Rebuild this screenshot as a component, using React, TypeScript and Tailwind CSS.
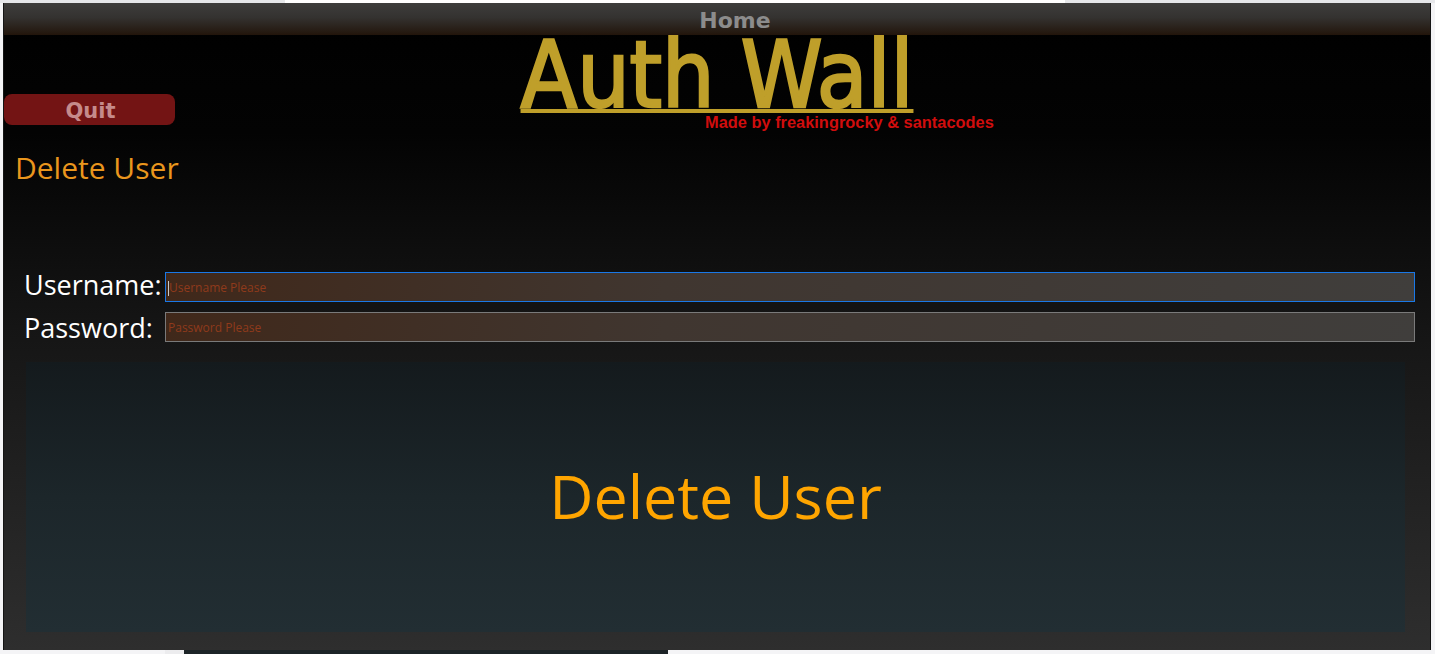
import React from 'react'

export default function App() {
  return (
    <div className="w-[1435px] h-[654px] overflow-hidden bg-[#f4f4f6] flex flex-col" style={{ fontFamily: '"Open Sans", "Noto Sans", sans-serif' }}>
      {/* browser strip above */}
      <div className="h-[3px] flex shrink-0">
        <div className="w-[285px] bg-[#e6e7ea]" />
        <div className="w-[780px] bg-white" />
        <div className="flex-1 bg-[#e6e7ea]" />
      </div>

      <div className="ml-[3px] w-[1428px] h-[647px] shrink-0 flex flex-col border-x border-[#151515] bg-[linear-gradient(180deg,#000_0%,#030303_20%,#151515_50%,#2e2e2e_100%)]">
        {/* header */}
        <div className="relative z-10 h-[32px] shrink-0 flex items-center justify-center pl-[36px] pt-[3px] bg-[linear-gradient(180deg,#3e3d3c_0%,#343230_45%,#22150b_100%)]">
          <span className="text-[22px] font-bold text-[#8c8c8c] leading-none" style={{ fontFamily: '"DejaVu Sans", Verdana, sans-serif' }}>Home</span>
        </div>

        {/* title row */}
        <div className="grid grid-cols-[1fr_auto_1fr] h-[76px]">
          <div className="self-start mt-[59px]">
            <button className="w-[171px] h-[31px] rounded-[8px] bg-[#731414] text-[#c58b8b] text-[21px] font-bold leading-none flex items-center justify-center pl-[2px] pt-[3px]" style={{ fontFamily: '"DejaVu Sans", Verdana, sans-serif' }}>
              Quit
            </button>
          </div>
          <h1 className="mt-[6px] h-[70px] text-[92px] leading-[70px] text-[#bf9f2a] [-webkit-text-stroke:2.5px_#bf9f2a] underline decoration-[4px] underline-offset-[2px]" style={{ fontFamily: '"DejaVu Sans Condensed", "Open Sans", sans-serif' }}>Auth Wall</h1>
          <div />
        </div>
        <div className="pl-[701px] h-[21px] flex items-center pt-[1px]">
          <span className="text-[16.4px] font-bold text-[#d00d0d] leading-none" style={{ fontFamily: '"Liberation Sans", Arial, sans-serif' }}>Made by freakingrocky &amp; santacodes</span>
        </div>

        {/* heading */}
        <h2 className="mt-[16px] pl-[11px] text-[30px] leading-[40px] text-[#ea961d]">Delete User</h2>

        {/* form */}
        <div className="mt-[84px] pl-[20px] pr-[15px] flex flex-col gap-[10px]">
          <div className="flex items-center h-[30px]">
            <label className="w-[141px] shrink-0 text-[27px] leading-none text-white -mt-[5px]">Username:</label>
            <div className="flex-1 h-[30px] border border-[#1a78e6] bg-[linear-gradient(100deg,#40281a_0%,#403630_40%,#403e3c_100%)] flex items-center pl-[2px] pt-[2px]">
              <span className="w-px h-[15px] bg-[#c9c9c9]" />
              <span className="text-[12px] text-[#8f3a1b] leading-none">Username Please</span>
            </div>
          </div>
          <div className="flex items-center h-[30px]">
            <label className="w-[141px] shrink-0 text-[27px] leading-none text-white">Password:</label>
            <div className="flex-1 h-[30px] border border-[#7a7a7a] bg-[linear-gradient(100deg,#40281a_0%,#403630_40%,#403e3c_100%)] flex items-center pl-[2px] pt-[2px]">
              <span className="text-[12px] text-[#8f3a1b] leading-none">Password Please</span>
            </div>
          </div>
        </div>

        {/* big button */}
        <button className="mt-[20px] ml-[22px] mr-[25px] h-[270px] shrink-0 flex items-center justify-center pb-[4px] bg-[linear-gradient(180deg,#141a1d_0%,#1c262a_50%,#222e33_100%)]">
          <span className="text-[61px] leading-none text-[#ffa500]">Delete User</span>
        </button>
      </div>

      {/* peeking window below */}
      <div className="flex h-[4px]">
        <div className="w-[165px]" />
        <div className="w-[19px] bg-[#ececee]" />
        <div className="w-[484px] bg-[#1c2427]" />
      </div>
    </div>
  )
}
